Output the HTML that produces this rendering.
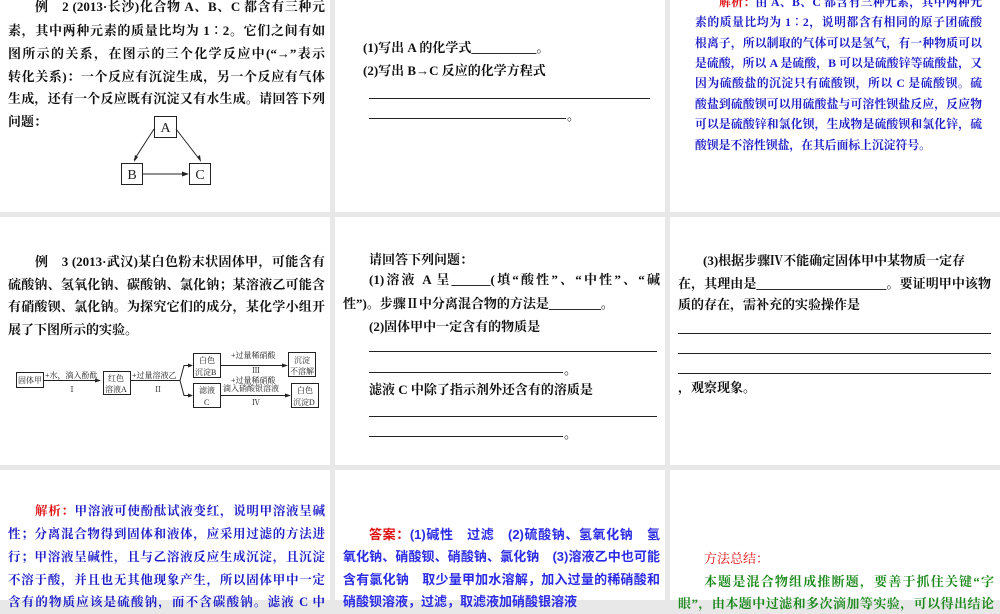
<!DOCTYPE html>
<html><head><meta charset="utf-8"><style>
body{margin:0;width:1000px;height:600px;background:#e8e8e8;position:relative;overflow:hidden;font-family:"Liberation Serif","Noto Serif CJK SC",serif}
.p{position:absolute;background:#fff;overflow:hidden}
.l{position:absolute;white-space:nowrap;font-size:13px;font-weight:bold;line-height:20px;height:20px;color:#111}
.j{text-align:justify;text-align-last:justify}
.b{color:#1c1cc8;font-size:11.8px}
.s{font-family:"Liberation Sans","Noto Sans CJK SC",sans-serif;color:#2b2be6;font-weight:bold;font-size:13px}
.r{color:#e01010}
.g{color:#1e8a1e}
.u{position:absolute;height:1px;background:#222}
</style></head><body>
<div class="p" style="left:0;top:0;width:330px;height:212px"></div>
<div class="p" style="left:335px;top:0;width:330px;height:212px"></div>
<div class="p" style="left:670px;top:0;width:330px;height:212px"></div>
<div class="p" style="left:0;top:217px;width:330px;height:248px"></div>
<div class="p" style="left:335px;top:217px;width:330px;height:248px"></div>
<div class="p" style="left:670px;top:217px;width:330px;height:248px"></div>
<div class="p" style="left:0;top:470px;width:330px;height:130px"></div>
<div class="p" style="left:335px;top:470px;width:330px;height:130px"></div>
<div class="p" style="left:670px;top:470px;width:330px;height:130px"></div>

<!-- panel 1 -->
<div class="l j" style="left:35px;top:-3px;width:290px">例　2 (2013·长沙)化合物 A、B、C 都含有三种元</div>
<div class="l j" style="left:8px;top:21px;width:317px">素，其中两种元素的质量比均为 1∶2。它们之间有如</div>
<div class="l j" style="left:8px;top:44px;width:317px">图所示的关系，在图示的三个化学反应中(“→”表示</div>
<div class="l j" style="left:8px;top:67px;width:317px">转化关系)：一个反应有沉淀生成，另一个反应有气体</div>
<div class="l j" style="left:8px;top:89px;width:317px">生成，还有一个反应既有沉淀又有水生成。请回答下列</div>
<div class="l" style="left:8px;top:112px">问题：</div>
<svg style="position:absolute;left:0;top:0" width="330" height="212">
<g fill="none" stroke="#222" stroke-width="1">
<rect x="154.5" y="116.5" width="22" height="21"/><rect x="121.5" y="163.5" width="21" height="21"/><rect x="189.5" y="163.5" width="21" height="21"/>
<line x1="154" y1="129" x2="134" y2="160"/><line x1="176" y1="129" x2="200" y2="160"/><line x1="143" y1="174" x2="186" y2="174"/></g>
<g fill="#222"><path d="M134 162l1-7 3 2z"/><path d="M201 162l-4-5 3-2z"/><path d="M189 174l-7-2.5v5z"/></g>
<g font-family="Liberation Serif" font-size="14" fill="#222" text-anchor="middle"><text x="165.5" y="132">A</text><text x="132" y="179">B</text><text x="200" y="179">C</text></g>
</svg>

<!-- panel 2 -->
<div class="l" style="left:363px;top:38px">(1)写出 A 的化学式__________。</div>
<div class="l" style="left:363px;top:61px">(2)写出 B→C 反应的化学方程式</div>
<div class="u" style="left:369px;top:98px;width:281px"></div>
<div class="u" style="left:369px;top:118px;width:197px"></div>
<div class="l" style="left:567px;top:106px">。</div>

<!-- panel 3 -->
<div class="l b j" style="left:719px;top:-8px;width:263px"><span class="r">解析：</span>由 A、B、C 都含有三种元素，其中两种元</div>
<div class="l b j" style="left:695px;top:12px;width:287px">素的质量比均为 1∶2，说明都含有相同的原子团硫酸</div>
<div class="l b j" style="left:695px;top:33px;width:287px">根离子，所以制取的气体可以是氢气，有一种物质可以</div>
<div class="l b j" style="left:695px;top:53px;width:287px">是硫酸，所以 A 是硫酸，B 可以是硫酸锌等硫酸盐，又</div>
<div class="l b j" style="left:695px;top:73px;width:287px">因为硫酸盐的沉淀只有硫酸钡，所以 C 是硫酸钡。硫</div>
<div class="l b j" style="left:695px;top:94px;width:287px">酸盐到硫酸钡可以用硫酸盐与可溶性钡盐反应，反应物</div>
<div class="l b j" style="left:695px;top:114px;width:287px">可以是硫酸锌和氯化钡，生成物是硫酸钡和氯化锌，硫</div>
<div class="l b" style="left:695px;top:135px">酸钡是不溶性钡盐，在其后面标上沉淀符号。</div>

<!-- panel 4 -->
<div class="l j" style="left:35px;top:252px;width:290px">例　3 (2013·武汉)某白色粉末状固体甲，可能含有</div>
<div class="l j" style="left:8px;top:275px;width:317px">硫酸钠、氢氧化钠、碳酸钠、氯化钠；某溶液乙可能含</div>
<div class="l j" style="left:8px;top:297px;width:317px">有硝酸钡、氯化钠。为探究它们的成分，某化学小组开</div>
<div class="l" style="left:8px;top:320px">展了下图所示的实验。</div>
<svg style="position:absolute;left:0;top:340px" width="330" height="75" font-family="Liberation Serif,Noto Serif CJK SC,serif" font-size="8" fill="#222">
<g fill="none" stroke="#222" stroke-width="1">
<rect x="16.5" y="32.5" width="27" height="15"/><rect x="103.5" y="31.5" width="27" height="23"/>
<rect x="193.5" y="13.5" width="27" height="24"/><rect x="193.5" y="43.5" width="27" height="24"/>
<rect x="288.5" y="12.5" width="27" height="24"/><rect x="291.5" y="43.5" width="27" height="24"/>
<path d="M43 40.5h57M130 40.5h50M180 40.5l4-15h6M180 40.5l4 15h6M220 25.5h64M220 55.5h68"/></g>
<path d="M101 40.5l-6-2v4zM193 25.5l-5-2v4zM193 55.5l-5-2v4zM288 25.5l-6-2v4zM291 55.5l-6-2v4z"/>
<text x="18" y="43">固体甲</text><text x="45" y="38">+水，滴入酚酞</text><text x="68" y="52">Ⅰ</text>
<text x="108" y="41">红色</text><text x="105" y="52">溶液A</text>
<text x="132" y="38">+过量溶液乙</text><text x="154" y="52">Ⅱ</text>
<text x="199" y="23">白色</text><text x="195" y="35">沉淀B</text><text x="199" y="53">滤液</text><text x="204" y="65">C</text>
<text x="231" y="18">+过量稀硝酸</text><text x="252" y="33">Ⅲ</text>
<text x="231" y="43">+过量稀硝酸</text><text x="223" y="51">滴入硝酸银溶液</text><text x="252" y="65">Ⅳ</text>
<text x="294" y="23">沉淀</text><text x="290" y="34">不溶解</text><text x="297" y="53">白色</text><text x="293" y="65">沉淀D</text>
</svg>

<!-- panel 5 -->
<div class="l" style="left:369px;top:250px">请回答下列问题：</div>
<div class="l j" style="left:369px;top:270px;width:291px">(1)溶液 A 呈______(填“酸性”、“中性”、“碱</div>
<div class="l" style="left:343px;top:294px">性”)。步骤Ⅱ中分离混合物的方法是________。</div>
<div class="l" style="left:369px;top:317px">(2)固体甲中一定含有的物质是</div>
<div class="u" style="left:369px;top:351px;width:288px"></div>
<div class="u" style="left:369px;top:372px;width:194px"></div>
<div class="l" style="left:564px;top:360px">。</div>
<div class="l" style="left:369px;top:380px">滤液 C 中除了指示剂外还含有的溶质是</div>
<div class="u" style="left:369px;top:416px;width:288px"></div>
<div class="u" style="left:369px;top:436px;width:194px"></div>
<div class="l" style="left:564px;top:424px">。</div>

<!-- panel 6 -->
<div class="l" style="left:703px;top:251px">(3)根据步骤Ⅳ不能确定固体甲中某物质一定存</div>
<div class="l j" style="left:678px;top:274px;width:313px">在，其理由是____________________。要证明甲中该物</div>
<div class="l" style="left:678px;top:295px">质的存在，需补充的实验操作是</div>
<div class="u" style="left:678px;top:333px;width:313px"></div>
<div class="u" style="left:678px;top:353px;width:313px"></div>
<div class="u" style="left:678px;top:373px;width:313px"></div>
<div class="l" style="left:678px;top:378px">，观察现象。</div>

<!-- panel 7 -->
<div class="l b j" style="left:35px;top:501px;width:290px;font-size:12.5px"><span class="r">解析：</span>甲溶液可使酚酞试液变红，说明甲溶液呈碱</div>
<div class="l b j" style="left:8px;top:524px;width:317px;font-size:12.5px">性；分离混合物得到固体和液体，应采用过滤的方法进</div>
<div class="l b j" style="left:8px;top:547px;width:317px;font-size:12.5px">行；甲溶液呈碱性，且与乙溶液反应生成沉淀，且沉淀</div>
<div class="l b j" style="left:8px;top:570px;width:317px;font-size:12.5px">不溶于酸，并且也无其他现象产生，所以固体甲中一定</div>
<div class="l b j" style="left:8px;top:592px;width:317px;font-size:12.5px">含有的物质应该是硫酸钠，而不含碳酸钠。滤液 C 中</div>

<!-- panel 8 -->
<div class="l s j" style="left:369px;top:525px;width:291px"><span class="r">答案：</span>(1)碱性　过滤　(2)硫酸钠、氢氧化钠　氢</div>
<div class="l s j" style="left:343px;top:547px;width:317px">氧化钠、硝酸钡、硝酸钠、氯化钠　(3)溶液乙中也可能</div>
<div class="l s j" style="left:343px;top:570px;width:317px">含有氯化钠　取少量甲加水溶解，加入过量的稀硝酸和</div>
<div class="l s" style="left:343px;top:592px">硝酸钡溶液，过滤，取滤液加硝酸银溶液</div>

<!-- panel 9 -->
<div class="l r" style="left:704px;top:549px;font-weight:normal">方法总结：</div>
<div class="l g j" style="left:704px;top:572px;width:290px">本题是混合物组成推断题，要善于抓住关键“字</div>
<div class="l g j" style="left:678px;top:594px;width:316px">眼”，由本题中过滤和多次滴加等实验，可以得出结论</div>
</body></html>
